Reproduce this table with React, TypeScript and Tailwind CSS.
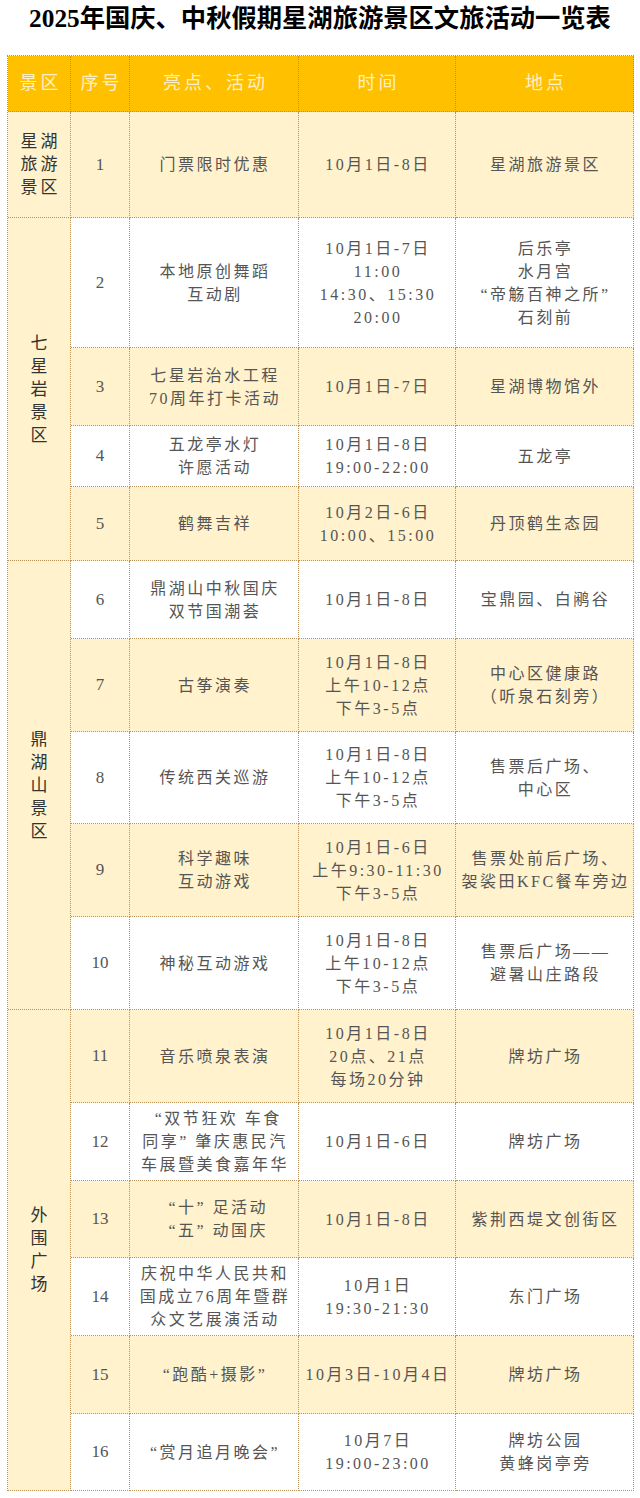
import React from "react";

type Row = { n: number; act: string[]; time: string[]; loc: string[] };

const rows: Row[] = [
  { n: 1, act: ["门票限时优惠"], time: ["10月1日-8日"], loc: ["星湖旅游景区"] },
  {
    n: 2,
    act: ["本地原创舞蹈", "互动剧"],
    time: ["10月1日-7日", "11:00", "14:30、15:30", "20:00"],
    loc: ["后乐亭", "水月宫", "“帝觞百神之所”", "石刻前"],
  },
  { n: 3, act: ["七星岩治水工程", "70周年打卡活动"], time: ["10月1日-7日"], loc: ["星湖博物馆外"] },
  { n: 4, act: ["五龙亭水灯", "许愿活动"], time: ["10月1日-8日", "19:00-22:00"], loc: ["五龙亭"] },
  { n: 5, act: ["鹤舞吉祥"], time: ["10月2日-6日", "10:00、15:00"], loc: ["丹顶鹤生态园"] },
  { n: 6, act: ["鼎湖山中秋国庆", "双节国潮荟"], time: ["10月1日-8日"], loc: ["宝鼎园、白鹇谷"] },
  {
    n: 7,
    act: ["古筝演奏"],
    time: ["10月1日-8日", "上午10-12点", "下午3-5点"],
    loc: ["中心区健康路", "（听泉石刻旁）"],
  },
  {
    n: 8,
    act: ["传统西关巡游"],
    time: ["10月1日-8日", "上午10-12点", "下午3-5点"],
    loc: ["售票后广场、", "中心区"],
  },
  {
    n: 9,
    act: ["科学趣味", "互动游戏"],
    time: ["10月1日-6日", "上午9:30-11:30", "下午3-5点"],
    loc: ["售票处前后广场、", "袈裟田KFC餐车旁边"],
  },
  {
    n: 10,
    act: ["神秘互动游戏"],
    time: ["10月1日-8日", "上午10-12点", "下午3-5点"],
    loc: ["售票后广场——", "避暑山庄路段"],
  },
  {
    n: 11,
    act: ["音乐喷泉表演"],
    time: ["10月1日-8日", "20点、21点", "每场20分钟"],
    loc: ["牌坊广场"],
  },
  {
    n: 12,
    act: ["“双节狂欢 车食", "同享”肇庆惠民汽", "车展暨美食嘉年华"],
    time: ["10月1日-6日"],
    loc: ["牌坊广场"],
  },
  { n: 13, act: ["“十”足活动", "“五”动国庆"], time: ["10月1日-8日"], loc: ["紫荆西堤文创街区"] },
  {
    n: 14,
    act: ["庆祝中华人民共和", "国成立76周年暨群", "众文艺展演活动"],
    time: ["10月1日", "19:30-21:30"],
    loc: ["东门广场"],
  },
  { n: 15, act: ["“跑酷+摄影”"], time: ["10月3日-10月4日"], loc: ["牌坊广场"] },
  { n: 16, act: ["“赏月追月晚会”"], time: ["10月7日", "19:00-23:00"], loc: ["牌坊公园", "黄蜂岗亭旁"] },
];

const FONT = "[font-family:'Liberation_Serif','Noto_Sans_CJK_SC',serif]";

function Line({ text }: { text: string }) {
  const parts: React.ReactNode[] = [];
  let buf = "";
  let k = 0;
  for (const ch of text) {
    if (ch === "“" || ch === "”") {
      if (buf) parts.push(<span key={k++}>{buf}</span>);
      buf = "";
      parts.push(
        <span
          key={k++}
          className={
            "inline-block w-[16px] " + (ch === "“" ? "text-right" : "text-left")
          }
        >
          {ch}
        </span>
      );
    } else {
      buf += ch;
    }
  }
  if (buf) parts.push(<span key={k++}>{buf}</span>);
  return <div className="whitespace-pre">{parts}</div>;
}

function Cell({
  lines,
  cream,
  extra = "",
}: {
  lines: string[];
  cream: boolean;
  extra?: string;
}) {
  return (
    <div
      className={
        "flex flex-col items-center justify-center border-r border-b border-dotted border-[#b8925a] text-center text-[16px] leading-[23px] tracking-[2.5px] text-[#555] pl-[2px] " +
        (cream ? "bg-[#fff2cc] " : "bg-white ") +
        extra
      }
    >
      {lines.map((l, i) => (
        <Line key={i} text={l} />
      ))}
    </div>
  );
}

function Zone({ chars, span }: { chars: string[]; span: string }) {
  return (
    <div
      className={
        "flex flex-col items-center justify-center border-r border-b border-dotted border-[#b8925a] bg-[#fff2cc] text-[17px] leading-[23px] tracking-[3px] text-[#333] pl-[3px] " +
        span
      }
    >
      {chars.map((c, i) => (
        <div key={i}>{c}</div>
      ))}
    </div>
  );
}

function Head({ text }: { text: string }) {
  return (
    <div className="flex items-center justify-center border-r border-b border-dotted border-[#b8925a] bg-[#ffc000] text-[18px] tracking-[3px] pl-[3px] text-[#fff0c4]">
      {text}
    </div>
  );
}

export default function App() {
  const zoneFor = (n: number) => {
    if (n === 1) return <Zone chars={["星湖", "旅游", "景区"]} span="row-span-1" />;
    if (n === 2) return <Zone chars={["七", "星", "岩", "景", "区"]} span="row-span-4" />;
    if (n === 6) return <Zone chars={["鼎", "湖", "山", "景", "区"]} span="row-span-5" />;
    if (n === 11) return <Zone chars={["外", "围", "广", "场"]} span="row-span-6" />;
    return null;
  };

  return (
    <div className={"w-[640px] min-h-[1498px] bg-white " + FONT}>
      <div className="h-[55px]">
        <h1 className="text-center text-[25.3px] leading-[36px] font-bold text-black [font-family:'Liberation_Serif','Noto_Sans_CJK_SC',serif]">
          2025年国庆、中秋假期星湖旅游景区文旅活动一览表
        </h1>
      </div>
      <div className="ml-[7px] w-[627px] border-l border-t border-dotted border-[#b8925a] grid grid-cols-[63px_59px_169px_157px_178px] grid-rows-[56px_106px_130px_78px_61px_74px_78px_93px_92px_93px_93px_93px_78px_77px_78px_78px_77px]">
        <Head text="景区" />
        <Head text="序号" />
        <Head text="亮点、活动" />
        <Head text="时间" />
        <Head text="地点" />
        {rows.map((r) => {
          const cream = r.n % 2 === 1;
          return (
            <React.Fragment key={r.n}>
              {zoneFor(r.n)}
              <div
                className={
                  "flex items-center justify-center border-r border-b border-dotted border-[#b8925a] text-[17px] text-[#555] " +
                  (cream ? "bg-[#fff2cc]" : "bg-white")
                }
              >
                {r.n}
              </div>
              <Cell lines={r.act} cream={cream} />
              <Cell lines={r.time} cream={cream} />
              <Cell lines={r.loc} cream={cream} />
            </React.Fragment>
          );
        })}
      </div>
    </div>
  );
}
